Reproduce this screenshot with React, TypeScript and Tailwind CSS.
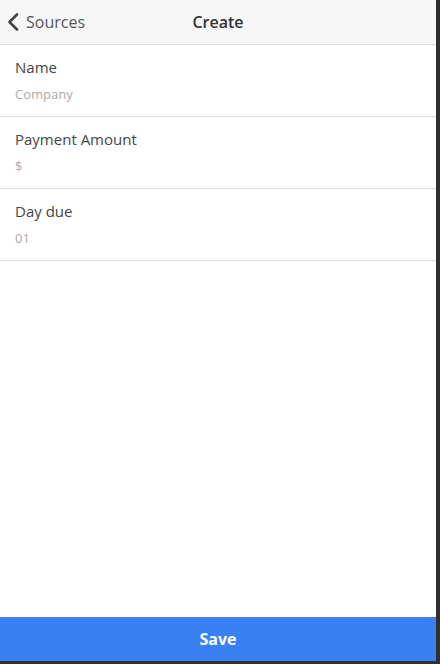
const fields = [
  { label: "Name", placeholder: "Company" },
  { label: "Payment Amount", placeholder: "$" },
  { label: "Day due", placeholder: "01" },
];

export default function App() {
  return (
    <div className="h-[664px] w-[440px] bg-[#2f2f2f] font-['Open_Sans',sans-serif]">
      <div className="flex h-[661px] w-[436px] flex-col bg-white">
        {/* Header */}
        <div className="relative flex h-[45px] shrink-0 items-center border-b border-[#dcdcdc] bg-[#f7f7f7]">
          <button className="flex items-center pl-[7px] text-[16px] text-[#555]">
            <svg width="12" height="18" viewBox="0 0 12 18" className="text-[#444]">
              <polyline
                points="10,1.5 2.5,9 10,16.5"
                fill="none"
                stroke="currentColor"
                strokeWidth="2.6"
                strokeLinecap="round"
                strokeLinejoin="round"
              />
            </svg>
            <span className="ml-[7px]">Sources</span>
          </button>
          <h1 className="pointer-events-none absolute left-0 right-0 text-center text-[16px] font-semibold text-[#333]">
            Create
          </h1>
        </div>

        {/* Form */}
        <div className="flex-1">
          {fields.map((f) => (
            <div key={f.label} className="flex h-[72px] flex-col border-b border-[#dedede] px-[15px] pt-[12px]">
              <label className="text-[15px] leading-[20px] text-[#444]">{f.label}</label>
              <input
                placeholder={f.placeholder}
                className="mt-[8px] text-[13px] leading-[18px] outline-none placeholder:text-[#aaa]"
              />
            </div>
          ))}
        </div>

        <button className="flex h-[44px] shrink-0 items-center justify-center bg-[#3880f3] text-[16px] font-bold text-white">
          Save
        </button>
      </div>
    </div>
  );
}
